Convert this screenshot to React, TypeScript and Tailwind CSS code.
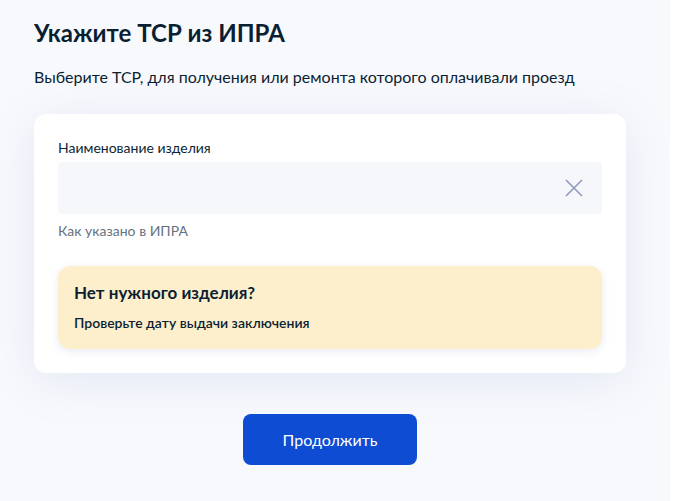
import React from "react";

export default function App() {
  return (
    <div className="flex min-h-[501px] w-full bg-white" style={{ fontFamily: "Lato, 'Noto Sans', sans-serif" }}>
      <div className="flex w-[670px] flex-col bg-[#f8f9fd] px-[34px] pt-[17px] pb-[36px]">
        <h1 className="text-[24px] font-bold leading-[32px] text-[#0b1f33]">Укажите ТСР из ИПРА</h1>
        <p className="mt-[16px] text-[16px] leading-[24px] text-[#0b1f33]">
          Выберите ТСР, для получения или ремонта которого оплачивали проезд
        </p>
        <div className="mt-[25px] w-[592px] rounded-[12px] bg-white px-[24px] pt-[24px] pb-[24px] shadow-[0_8px_48px_rgba(101,124,180,0.14)]">
          <div className="text-[14px] leading-[20px] text-[#0b1f33]">Наименование изделия</div>
          <div className="mt-[4px] flex h-[52px] items-center justify-end rounded-[4px] bg-[#f5f7fa] pr-[19px]">
            <svg width="18" height="18" viewBox="0 0 18 18" fill="none">
              <path d="M1 1L17 17M17 1L1 17" stroke="#8d9bbd" strokeWidth="1.6" />
            </svg>
          </div>
          <div className="mt-[7px] text-[14px] leading-[20px] text-[#66727f]">Как указано в ИПРА</div>
          <div className="mt-[25px] rounded-[12px] bg-[#feefcc] px-[16px] pt-[15px] pb-[16px] shadow-[0_2px_8px_rgba(101,124,180,0.15)]">
            <div className="text-[17px] font-bold leading-[24px] text-[#0b1f33]">Нет нужного изделия?</div>
            <div className="mt-[8px] text-[14px] font-semibold leading-[20px] text-[#0b1f33]">
              Проверьте дату выдачи заключения
            </div>
          </div>
        </div>
        <div className="mt-[41px] flex w-[592px] justify-center">
          <button className="h-[51px] w-[174px] rounded-[8px] bg-[#0d4cd3] text-[16px] leading-[24px] text-white">
            Продолжить
          </button>
        </div>
      </div>
    </div>
  );
}
